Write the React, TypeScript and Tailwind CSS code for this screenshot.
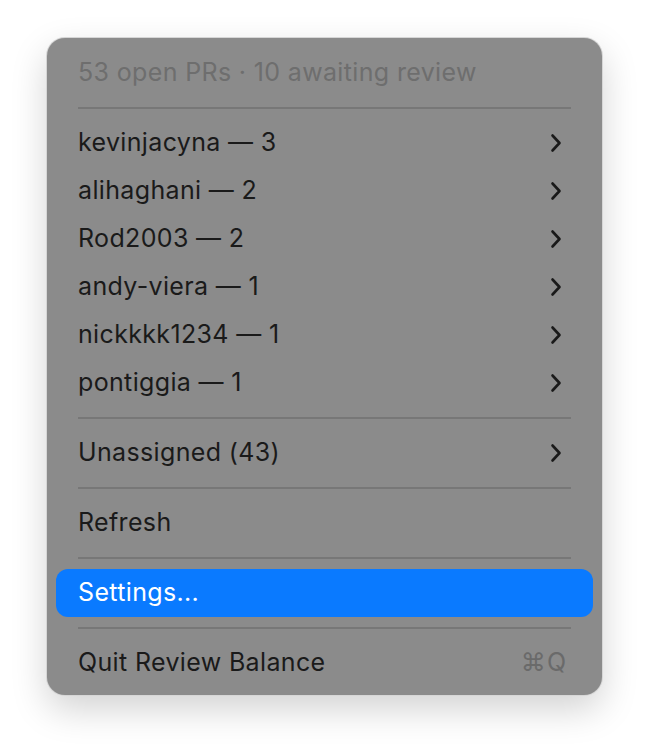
import React from 'react';

const users = [
  'kevinjacyna — 3',
  'alihaghani — 2',
  'Rod2003 — 2',
  'andy-viera — 1',
  'nickkkk1234 — 1',
  'pontiggia — 1',
];

function Chevron() {
  return (
    <svg width="14" height="20" viewBox="0 0 14 20" fill="none" className="text-[#1a1a1a]">
      <path d="M3.5 2.5 L10.5 10 L3.5 17.5" stroke="currentColor" strokeWidth="2.6" strokeLinecap="round" strokeLinejoin="round" />
    </svg>
  );
}

function Separator() {
  return (
    <div className="h-[22px] flex items-center px-[31px]">
      <div className="h-[1.5px] w-full bg-[#777777]" />
    </div>
  );
}

function Row({ label, submenu, shortcut, active }: { label: string; submenu?: boolean; shortcut?: string; active?: boolean }) {
  return (
    <div
      className={`h-12 mx-[9px] rounded-[12px] flex items-center justify-between pl-[22px] pr-[30px] ${
        active ? 'bg-[#0a7aff] text-white' : 'text-[#1a1a1a]'
      }`}
    >
      <span>{label}</span>
      {submenu && <Chevron />}
      {shortcut && <span className="text-[#6a6a6a] tracking-[1px] -mr-[4px]">{shortcut}</span>}
    </div>
  );
}

export default function App() {
  return (
    <div className="min-h-screen bg-white pt-[38px] pl-[47px] font-['Inter','Liberation_Sans',sans-serif]">
      <div className="w-[555px] h-[657px] bg-[#8b8b8b] rounded-[18px] ring-1 ring-[#d6d6d6] shadow-[0_14px_36px_rgba(0,0,0,0.18)] pt-[11px] pb-[9px] text-[25px] tracking-[0.35px]">
        <div className="h-12 flex items-center pl-[31px] text-[#6e6e6e]">53 open PRs · 10 awaiting review</div>
        <Separator />
        {users.map((u) => (
          <Row key={u} label={u} submenu />
        ))}
        <Separator />
        <Row label="Unassigned (43)" submenu />
        <Separator />
        <Row label="Refresh" />
        <Separator />
        <Row label="Settings..." active />
        <Separator />
        <Row label="Quit Review Balance" shortcut="⌘Q" />
      </div>
    </div>
  );
}
